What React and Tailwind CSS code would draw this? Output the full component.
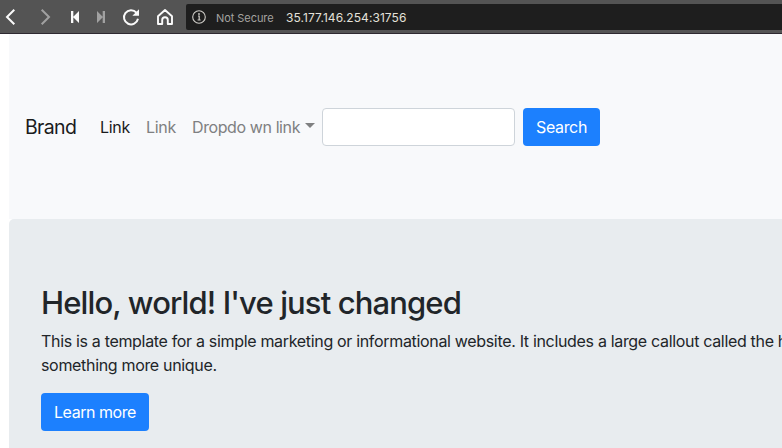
function BrowserBar() {
  return (
    <header className="flex h-[34px] shrink-0 items-start border-b border-[#2d2830] bg-[#545454]">
      <svg width="186" height="33" viewBox="0 0 186 33" fill="none" className="shrink-0">
        <path d="M14.3 9.8 7 17l7.3 7.3" stroke="#fafafa" strokeWidth="2" />
        <path d="m41.7 9.8 7.3 7.2-7.3 7.3" stroke="#a1a1a1" strokeWidth="2" />
        <path d="M71 11h2.3v12H71zM79 11v12l-6-6z" fill="#fafafa" />
        <path d="M102.7 11h2.3v12h-2.3zM97 11v12l6-6z" fill="#a1a1a1" />
        <path d="M136.4 12.6A7.1 7.1 0 1 0 138 18.8" stroke="#fafafa" strokeWidth="2" />
        <path d="M139 9.2v6.6h-6.6z" fill="#fafafa" />
        <path
          d="M158 16.2 165 10l7 6.2V24h-4.2v-4a2.8 2.8 0 0 0-5.6 0v4H158z"
          stroke="#fafafa"
          strokeWidth="1.9"
          strokeLinejoin="round"
        />
      </svg>
      <div className="mt-1 flex h-[26px] flex-1 items-center rounded-l-[2px] bg-[#1e1e1e] pl-[6px] whitespace-nowrap">
        <svg width="14" height="14" viewBox="0 0 14 14" fill="none" className="shrink-0">
          <circle cx="7" cy="7" r="6.3" stroke="#d0cec9" strokeWidth="1.1" />
          <path d="M6 6h1.2v4M5.6 10h3" stroke="#d0cec9" strokeWidth="1.2" />
          <circle cx="7" cy="4" r="0.9" fill="#d0cec9" />
        </svg>
        <span className="mt-0.5 ml-[10px] w-[70px] text-[11px] tracking-[-0.06px] text-[#a5a3a0]">Not Secure</span>
        <span className="mt-0.5 text-[12px] tracking-[0.07px] text-[#e4e1da]">35.177.146.254:31756</span>
      </div>
    </header>
  );
}

function Navbar() {
  return (
    <nav className="flex h-[185px] shrink-0 items-center bg-[#f8f9fb] pl-4 whitespace-nowrap">
      <a className="w-[75px] pt-0.5 text-[19.5px] tracking-[-0.65px] text-[#1a1b1c]">Brand</a>
      <a className="w-[46px] tracking-[-0.3px] text-[#1a1b1c]">Link</a>
      <a className="w-[46px] tracking-[-0.3px] text-[#7f8081]">Link</a>
      <a className="flex w-[130px] items-center text-[#7f8081]">
        <span className="w-[113.4px] tracking-[-0.4px]">Dropdo wn link</span>
        <span className="-mt-0.5 h-0 w-0 border-x-[5px] border-t-[5px] border-x-transparent border-t-[#7f8081]" />
      </a>
      <input
        aria-label="Search"
        className="mr-2 h-[38px] w-[193px] rounded border border-[#ced4da] bg-white px-3 outline-none"
      />
      <button className="h-[38px] w-[77px] rounded bg-[#1c80fe] tracking-[-0.35px] text-white">Search</button>
    </nav>
  );
}

function Hero() {
  return (
    <main className="flex-1 rounded-tl-[5px] bg-[#e8ecef] px-8 pt-[65px] whitespace-nowrap text-[#212529]">
      <h1 className="mb-[7px] text-[31px] leading-[38.4px] font-medium tracking-[-0.88px]">
        Hello, world! I've just changed
      </h1>
      <p className="mb-4 leading-6 tracking-[-0.325px]">
        This is a template for a simple marketing or informational website. It includes a large callout called the hero
        <br />
        something more unique.
      </p>
      <button className="h-[38px] w-[108px] rounded bg-[#1c80fe] tracking-[-0.45px] text-white">Learn more</button>
    </main>
  );
}

export default function App() {
  return (
    <div className="flex h-[448px] w-full flex-col overflow-hidden bg-white font-['Inter','Liberation_Sans',sans-serif] text-[16px] antialiased">
      <BrowserBar />
      <div className="ml-[9px] flex min-h-0 flex-1 flex-col overflow-hidden">
        <Navbar />
        <Hero />
      </div>
    </div>
  );
}
